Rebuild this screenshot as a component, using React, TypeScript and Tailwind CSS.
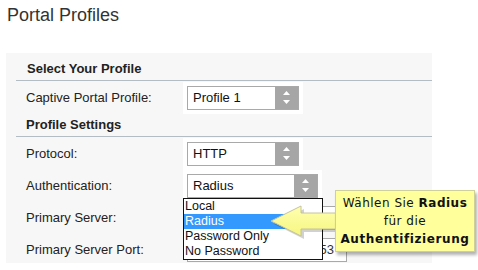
import React from "react";

const SelectBox = ({ value, width }: { value: string; width: string }) => {
  return (
    <div className="bg-white p-[4px]">
      <div className={`flex h-[24px] border border-[#a9a9a9] bg-white ${width}`}>
        <div className="flex-1 pl-[5px] text-[13px] leading-[22px] text-[#111]">{value}</div>
        <div className="w-[23px] bg-[#a6a6a6] flex items-center justify-center">
          <svg width="7" height="14" viewBox="0 0 7 14">
            <polygon points="0,4 3.5,0 7,4" fill="#fff" />
            <polygon points="0,9 7,9 3.5,13" fill="#fff" />
          </svg>
        </div>
      </div>
    </div>
  );
};

const Row = ({ label, children, height = "h-[32px]" }: { label: string; children?: React.ReactNode; height?: string }) => (
  <div className={`flex items-center ${height}`}>
    <div className="w-[177px] pl-[20px] text-[13px] text-[#222]">{label}</div>
    {children}
  </div>
);

export default function App() {
  const options = ["Local", "Radius", "Password Only", "No Password"];

  return (
    <div className="relative w-[478px] h-[270px] overflow-hidden bg-white font-['Liberation_Sans',Arial,sans-serif]">
      <h1 className="pl-[7px] pt-[4px] text-[18px] leading-[22px] text-[#333]">Portal Profiles</h1>

      {/* settings panel */}
      <div className="mt-[27px] ml-[6px] w-[426px] h-[210px] overflow-hidden bg-[#f7f7f7]">
        <div className="h-[27px] pt-[8px] pl-[21px] text-[13px] leading-[16px] font-bold text-[#222]">Select Your Profile</div>
        <div className="ml-[10px] h-px bg-[#b4bcc4]" />
        <Row label="Captive Portal Profile:" height="h-[33px]">
          <SelectBox value="Profile 1" width="w-[112px]" />
        </Row>
        <div className="h-[22px] pt-[3px] pl-[20px] text-[13px] leading-[16px] font-bold text-[#222]">Profile Settings</div>
        <div className="ml-[10px] h-px bg-[#b4bcc4]" />
        <div className="pt-px">
          <Row label="Protocol:">
            <SelectBox value="HTTP" width="w-[112px]" />
          </Row>
          <Row label="Authentication:">
            <SelectBox value="Radius" width="w-[131px]" />
          </Row>
          <Row label="Primary Server:">
            <div className="ml-[4px] h-[24px] w-[160px] border border-[#a9a9a9] bg-white" />
          </Row>
          <Row label="Primary Server Port:">
            <div className="ml-[4px] h-[24px] w-[160px] border border-[#a9a9a9] bg-white pr-[12px] text-right text-[13px] leading-[22px] text-[#333]">1553</div>
          </Row>
        </div>
      </div>

      {/* open dropdown list */}
      <div className="absolute left-[183px] top-[198px] w-[140px] border border-[#111] bg-white text-[12.5px] text-[#111]">
        {options.map((o) => (
          <div
            key={o}
            className={`h-[15px] pl-[1px] leading-[15px] ${o === "Radius" ? "bg-[#3399ff] text-white" : ""}`}
          >
            {o}
          </div>
        ))}
      </div>

      {/* callout arrow */}
      <svg className="absolute left-[266px] top-[200px]" width="75" height="45" viewBox="0 0 75 45">
        <defs>
          <linearGradient id="arrowFill" x1="0" y1="0" x2="0" y2="1">
            <stop offset="0" stopColor="#ffffb0" />
            <stop offset="1" stopColor="#f6f680" />
          </linearGradient>
        </defs>
        <polygon points="8,24 38,9 38,16 73,16 73,32 38,32 38,39" fill="#000" opacity="0.18" />
        <polygon points="5,21 35,6 35,13 70,13 70,29 35,29 35,36" fill="url(#arrowFill)" stroke="#c4c49a" strokeWidth="1" />
      </svg>

      {/* callout box */}
      <div className="absolute left-[335px] top-[190px] w-[140px] h-[62px] border border-[#cfcf9a] bg-[#ffff9c] shadow-[2px_3px_3px_rgba(0,0,0,0.3)] pt-[3px] text-center font-['DejaVu_Sans',Verdana,sans-serif] text-[12px] leading-[18px] text-[#111] tracking-[0.5px]">
        <div>
          Wählen Sie <span className="font-bold">Radius</span>
        </div>
        <div>für die</div>
        <div className="font-bold tracking-[0.6px]">Authentifizierung</div>
      </div>
    </div>
  );
}
